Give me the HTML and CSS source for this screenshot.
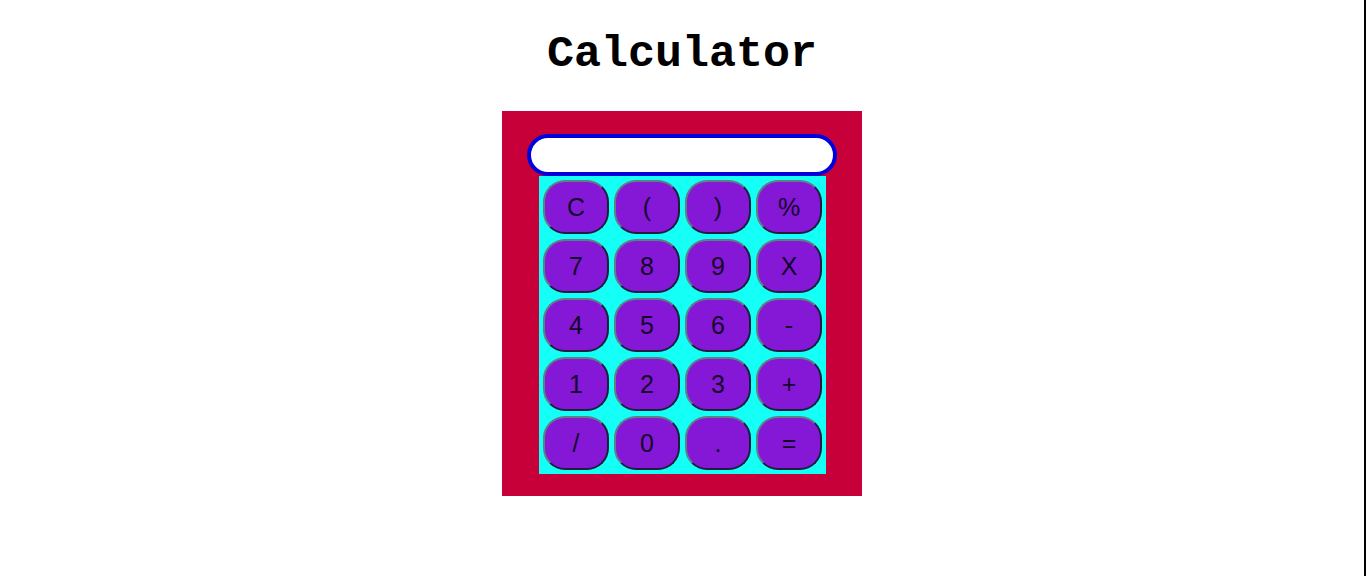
FILE: index.html
```html
<!DOCTYPE html>
<html>
<head>
<meta charset="utf-8">
<title>Calculator</title>
<link rel="stylesheet" href="styles.css">
</head>
<body>
<div class="edge"></div>
<h1 class="title">Calculator</h1>
<div class="calc">
  <input class="display" type="text">
  <div class="keys">
    <button class="key">C</button>
    <button class="key">(</button>
    <button class="key">)</button>
    <button class="key">%</button>
    <button class="key">7</button>
    <button class="key">8</button>
    <button class="key">9</button>
    <button class="key">X</button>
    <button class="key">4</button>
    <button class="key">5</button>
    <button class="key">6</button>
    <button class="key">-</button>
    <button class="key">1</button>
    <button class="key">2</button>
    <button class="key">3</button>
    <button class="key">+</button>
    <button class="key">/</button>
    <button class="key">0</button>
    <button class="key">.</button>
    <button class="key">=</button>
  </div>
</div>
</body>
</html>
```
FILE: styles.css
```css
html, body {
  margin: 0;
  padding: 0;
  background: #fff;
}
body {
  width: 1364px;
  height: 576px;
  display: flex;
  flex-direction: column;
  align-items: center;
}
.edge {
  position: fixed;
  top: 0;
  right: 0;
  width: 2px;
  height: 100%;
  background: #000;
}
.title {
  font-family: "Liberation Mono", "Courier New", monospace;
  font-weight: bold;
  font-size: 45px;
  line-height: 50px;
  margin: 30px 0 31px 0;
  color: #000;
}
.calc {
  width: 360px;
  height: 385px;
  background: #c8003a;
  display: flex;
  flex-direction: column;
  align-items: center;
  padding-top: 23px;
  box-sizing: border-box;
}
.display {
  width: 310px;
  height: 42px;
  box-sizing: border-box;
  border: 4px solid #0000dd;
  border-radius: 21px;
  background: #fff;
  margin: 0;
  padding: 0 14px;
  outline: none;
}
.keys {
  width: 287px;
  box-sizing: border-box;
  background: #14fff6;
  padding: 4px;
  display: grid;
  grid-template-columns: repeat(4, 66px);
  grid-auto-rows: 54px;
  gap: 5px;
  margin-left: 1px;
}
.key {
  margin: 0;
  padding: 0;
  background: #8418d6;
  border: 2px solid;
  border-color: #5e7e88 #1e1e3c #1e1e3c #5e7e88;
  border-radius: 22px;
  font-family: "Liberation Sans", Arial, sans-serif;
  font-size: 25px;
  color: #14062a;
}
```
